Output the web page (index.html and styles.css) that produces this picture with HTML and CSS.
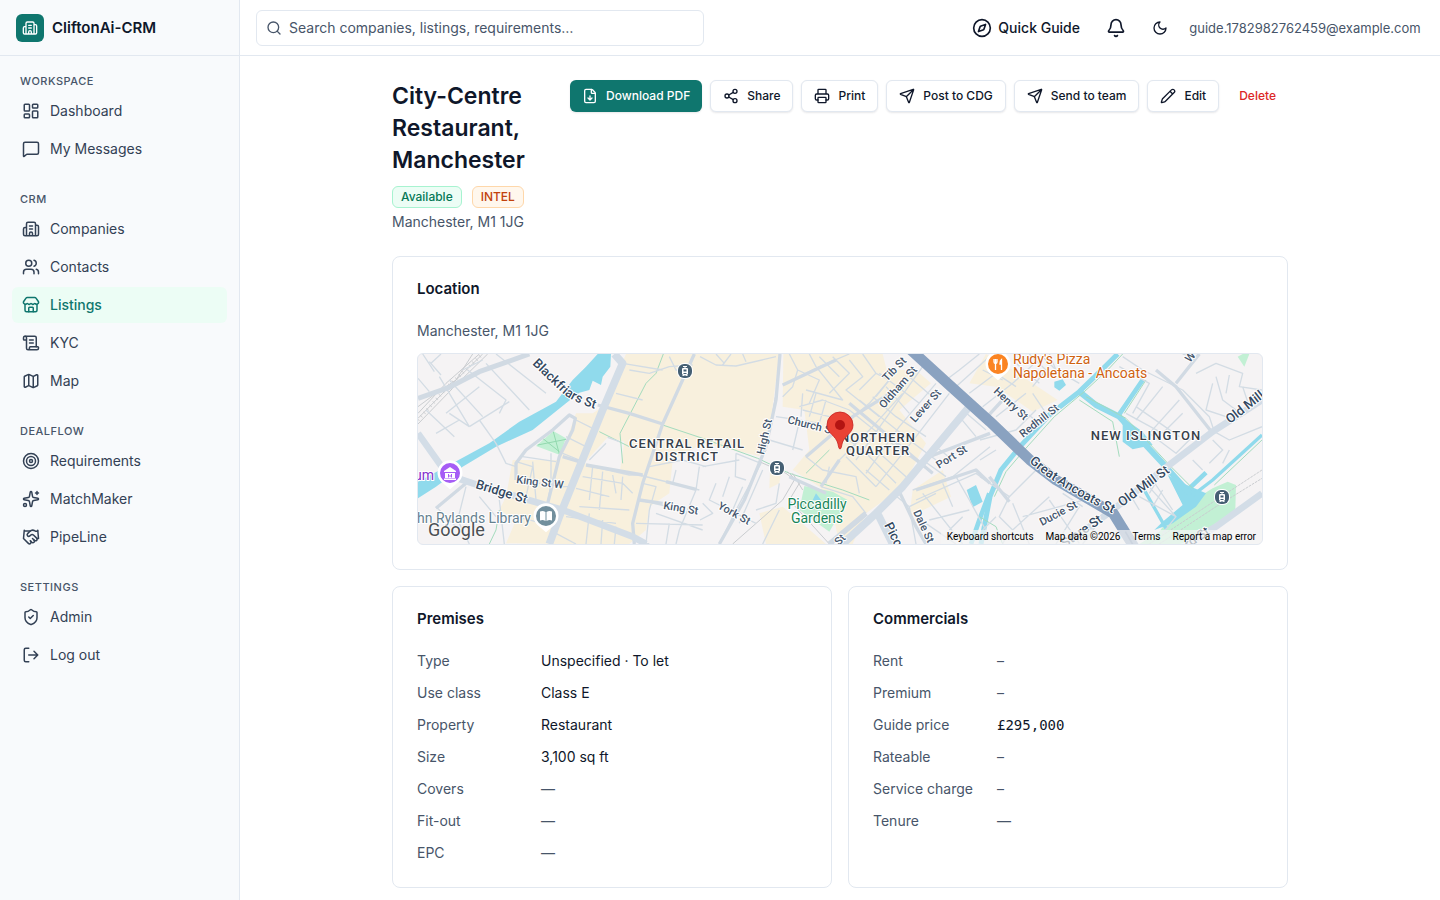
FILE: index.html
```html
<!DOCTYPE html>
<html lang="en">
<head>
<meta charset="utf-8">
<meta name="viewport" content="width=device-width, initial-scale=1">
<title>City-Centre Restaurant, Manchester · CliftonAi-CRM</title>
<link rel="stylesheet" href="styles.css">
</head>
<body>
<svg class="sprite" aria-hidden="true">
  <symbol id="building" viewBox="0 0 24 24"><path d="M10 12h4M10 8h4M14 21v-3a2 2 0 0 0-4 0v3M6 10H4a2 2 0 0 0-2 2v7a2 2 0 0 0 2 2h16a2 2 0 0 0 2-2V9a2 2 0 0 0-2-2h-2M6 21V5a2 2 0 0 1 2-2h8a2 2 0 0 1 2 2v16"/></symbol>
  <symbol id="dashboard" viewBox="0 0 24 24"><rect width="7" height="9" x="3" y="3" rx="1"/><rect width="7" height="5" x="14" y="3" rx="1"/><rect width="7" height="9" x="14" y="12" rx="1"/><rect width="7" height="5" x="3" y="16" rx="1"/></symbol>
  <symbol id="message" viewBox="0 0 24 24"><path d="M22 17a2 2 0 0 1-2 2H6.828a2 2 0 0 0-1.414.586l-2.202 2.202A.71.71 0 0 1 2 21.286V5a2 2 0 0 1 2-2h16a2 2 0 0 1 2 2z"/></symbol>
  <symbol id="users" viewBox="0 0 24 24"><path d="M16 21v-2a4 4 0 0 0-4-4H6a4 4 0 0 0-4 4v2M16 3.128a4 4 0 0 1 0 7.744M22 21v-2a4 4 0 0 0-3-3.870"/><circle cx="9" cy="7" r="4"/></symbol>
  <symbol id="store" viewBox="0 0 24 24"><path d="M15 21v-5a1 1 0 0 0-1-1h-4a1 1 0 0 0-1 1v5"/><path d="M17.774 10.31a1.12 1.12 0 0 0-1.549 0 2.5 2.5 0 0 1-3.451 0 1.12 1.12 0 0 0-1.548 0 2.5 2.5 0 0 1-3.452 0 1.12 1.12 0 0 0-1.549 0 2.5 2.5 0 0 1-3.77-3.248l2.889-4.184A2 2 0 0 1 7 2h10a2 2 0 0 1 1.653.873l2.895 4.192a2.5 2.5 0 0 1-3.774 3.244"/><path d="M4 10.95V19a2 2 0 0 0 2 2h12a2 2 0 0 0 2-2v-8.05"/></symbol>
  <symbol id="scroll" viewBox="0 0 24 24"><path d="M15 12h-5M15 8h-5M19 17V5a2 2 0 0 0-2-2H4"/><path d="M8 21h12a2 2 0 0 0 2-2v-1a1 1 0 0 0-1-1H11a1 1 0 0 0-1 1v1a2 2 0 1 1-4 0V5a2 2 0 1 0-4 0v2a1 1 0 0 0 1 1h3"/></symbol>
  <symbol id="map" viewBox="0 0 24 24"><path d="M14.106 5.553a2 2 0 0 0 1.788 0l3.659-1.83A1 1 0 0 1 21 4.619v12.764a1 1 0 0 1-.553.894l-4.553 2.277a2 2 0 0 1-1.788 0l-4.212-2.106a2 2 0 0 0-1.788 0l-3.659 1.83A1 1 0 0 1 3 19.381V6.618a1 1 0 0 1 .553-.894l4.553-2.277a2 2 0 0 1 1.788 0zM15 5.764v15M9 3.236v15"/></symbol>
  <symbol id="target" viewBox="0 0 24 24"><circle cx="12" cy="12" r="10"/><circle cx="12" cy="12" r="6"/><circle cx="12" cy="12" r="2"/></symbol>
  <symbol id="sparkles" viewBox="0 0 24 24"><path d="M11.017 2.814a1 1 0 0 1 1.966 0l1.051 5.558a2 2 0 0 0 1.594 1.594l5.558 1.051a1 1 0 0 1 0 1.966l-5.558 1.051a2 2 0 0 0-1.594 1.594l-1.051 5.558a1 1 0 0 1-1.966 0l-1.051-5.558a2 2 0 0 0-1.594-1.594l-5.558-1.051a1 1 0 0 1 0-1.966l5.558-1.051a2 2 0 0 0 1.594-1.594zM20 2v4M22 4h-4"/><circle cx="4" cy="20" r="2"/></symbol>
  <symbol id="handshake" viewBox="0 0 24 24"><path d="m11 17 2 2a1 1 0 1 0 3-3"/><path d="m14 14 2.500 2.500a1 1 0 1 0 3-3l-3.880-3.880a3 3 0 0 0-4.240 0l-.88.88a1 1 0 1 1-3-3l2.810-2.810a5.790 5.790 0 0 1 7.060-.87l.47.28a2 2 0 0 0 1.420.25L21 4"/><path d="m21 3 1 11h-2M3 3 2 14l6.500 6.500a1 1 0 1 0 3-3M3 4h8"/></symbol>
  <symbol id="shield" viewBox="0 0 24 24"><path d="M20 13c0 5-3.500 7.500-7.660 8.950a1 1 0 0 1-.67-.01C7.500 20.500 4 18 4 13V6a1 1 0 0 1 1-1c2 0 4.500-1.200 6.240-2.720a1.170 1.170 0 0 1 1.520 0C14.510 3.810 17 5 19 5a1 1 0 0 1 1 1z"/><path d="m9 12 2 2 4-4"/></symbol>
  <symbol id="logout" viewBox="0 0 24 24"><path d="m16 17 5-5-5-5M21 12H9M9 21H5a2 2 0 0 1-2-2V5a2 2 0 0 1 2-2h4"/></symbol>
  <symbol id="search" viewBox="0 0 24 24"><circle cx="11" cy="11" r="8"/><path d="m21 21-4.340-4.340"/></symbol>
  <symbol id="compass" viewBox="0 0 24 24"><path d="m16.240 7.760-1.804 5.411a2 2 0 0 1-1.265 1.265L7.760 16.240l1.804-5.411a2 2 0 0 1 1.265-1.265z"/><circle cx="12" cy="12" r="10"/></symbol>
  <symbol id="bell" viewBox="0 0 24 24"><path d="M10.268 21a2 2 0 0 0 3.464 0M3.262 15.326A1 1 0 0 0 4 17h16a1 1 0 0 0 .740-1.673C19.410 13.956 18 12.499 18 8A6 6 0 0 0 6 8c0 4.499-1.411 5.956-2.738 7.326"/></symbol>
  <symbol id="moon" viewBox="0 0 24 24"><path d="M12 3a6 6 0 0 0 9 9 9 9 0 1 1-9-9"/></symbol>
  <symbol id="file-down" viewBox="0 0 24 24"><path d="M6 22a2 2 0 0 1-2-2V4a2 2 0 0 1 2-2h8a2.400 2.400 0 0 1 1.704.706l3.588 3.588A2.400 2.400 0 0 1 20 8v12a2 2 0 0 1-2 2z"/><path d="M14 2v5a1 1 0 0 0 1 1h5M12 18v-6M9 15l3 3 3-3"/></symbol>
  <symbol id="share" viewBox="0 0 24 24"><circle cx="18" cy="5" r="3"/><circle cx="6" cy="12" r="3"/><circle cx="18" cy="19" r="3"/><path d="m8.590 13.510 6.830 3.980M15.410 6.510l-6.820 3.980"/></symbol>
  <symbol id="printer" viewBox="0 0 24 24"><path d="M6 18H4a2 2 0 0 1-2-2v-5a2 2 0 0 1 2-2h16a2 2 0 0 1 2 2v5a2 2 0 0 1-2 2h-2M6 9V3a1 1 0 0 1 1-1h10a1 1 0 0 1 1 1v6"/><rect x="6" y="14" width="12" height="8" rx="1"/></symbol>
  <symbol id="send" viewBox="0 0 24 24"><path d="M14.536 21.686a.5.5 0 0 0 .937-.024l6.500-19a.496.496 0 0 0-.635-.635l-19 6.500a.5.5 0 0 0-.024.937l7.930 3.180a2 2 0 0 1 1.112 1.110zM21.854 2.147l-10.940 10.939"/></symbol>
  <symbol id="pencil" viewBox="0 0 24 24"><path d="M21.174 6.812a1 1 0 0 0-3.986-3.987L3.842 16.174a2 2 0 0 0-.5.830l-1.321 4.352a.5.5 0 0 0 .623.622l4.353-1.320a2 2 0 0 0 .830-.497zM15 5l4 4"/></symbol>
  <symbol id="tram" viewBox="0 0 16 16"><rect x="0" y="0" width="16" height="16" rx="7" fill="#fff"/><rect x="1" y="1" width="14" height="14" rx="6" fill="#455f73"/><path d="M6 3h4v1H8.500v1H10a1 1 0 0 1 1 1v5l-1 1 1 1H9.500L9 12.500H7L6.500 13H5l1-1-1-1V6a1 1 0 0 1 1-1h1.500V4H6z" fill="#fff"/><path d="M6.500 6.500h3v2h-3zM6.500 10h3v1h-3z" fill="#455f73"/></symbol>
</svg>

<div class="app">
  <aside class="sidebar">
    <a class="brand" href="#">
      <span class="brand-mark"><svg class="icon icon-sm"><use href="#building"/></svg></span>
      <span>CliftonAi-CRM</span>
    </a>
    <nav class="nav" aria-label="Main">
      <section class="nav-group">
        <h2 class="nav-label">WORKSPACE</h2>
        <a class="nav-item" href="#"><svg class="icon"><use href="#dashboard"/></svg>Dashboard</a>
        <a class="nav-item" href="#"><svg class="icon"><use href="#message"/></svg>My Messages</a>
      </section>
      <section class="nav-group">
        <h2 class="nav-label">CRM</h2>
        <a class="nav-item" href="#"><svg class="icon"><use href="#building"/></svg>Companies</a>
        <a class="nav-item" href="#"><svg class="icon"><use href="#users"/></svg>Contacts</a>
        <a class="nav-item active" href="#" aria-current="page"><svg class="icon"><use href="#store"/></svg>Listings</a>
        <a class="nav-item" href="#"><svg class="icon"><use href="#scroll"/></svg>KYC</a>
        <a class="nav-item" href="#"><svg class="icon"><use href="#map"/></svg>Map</a>
      </section>
      <section class="nav-group">
        <h2 class="nav-label">DEALFLOW</h2>
        <a class="nav-item" href="#"><svg class="icon"><use href="#target"/></svg>Requirements</a>
        <a class="nav-item" href="#"><svg class="icon"><use href="#sparkles"/></svg>MatchMaker</a>
        <a class="nav-item" href="#"><svg class="icon"><use href="#handshake"/></svg>PipeLine</a>
      </section>
      <section class="nav-group">
        <h2 class="nav-label">SETTINGS</h2>
        <a class="nav-item" href="#"><svg class="icon"><use href="#shield"/></svg>Admin</a>
        <button class="nav-item" type="button"><svg class="icon"><use href="#logout"/></svg>Log out</button>
      </section>
    </nav>
  </aside>

  <div class="page">
    <header class="topbar">
      <label class="search">
        <svg class="icon icon-sm"><use href="#search"/></svg>
        <input type="search" aria-label="Search" placeholder="Search companies, listings, requirements…">
      </label>
      <div class="topbar-end">
        <button class="guide" type="button"><svg class="icon icon-lg"><use href="#compass"/></svg>Quick Guide</button>
        <button class="icon-button" type="button" aria-label="Notifications"><svg class="icon icon-lg"><use href="#bell"/></svg></button>
        <button class="icon-button" type="button" aria-label="Toggle dark mode"><svg class="icon icon-sm"><use href="#moon"/></svg></button>
        <span class="account">guide.1782982762459@example.com</span>
      </div>
    </header>

    <main class="content">
      <div class="listing-head">
        <div class="listing-title">
          <h1>City-Centre Restaurant, Manchester</h1>
          <div class="badges"><span class="badge badge-green">Available</span><span class="badge badge-orange">INTEL</span></div>
          <p class="muted">Manchester, M1 1JG</p>
        </div>
        <div class="actions">
          <button class="btn btn-primary" type="button"><svg class="icon icon-sm"><use href="#file-down"/></svg>Download PDF</button>
          <button class="btn" type="button"><svg class="icon icon-sm"><use href="#share"/></svg>Share</button>
          <button class="btn" type="button"><svg class="icon icon-sm"><use href="#printer"/></svg>Print</button>
          <button class="btn" type="button"><svg class="icon icon-sm"><use href="#send"/></svg>Post to CDG</button>
          <button class="btn" type="button"><svg class="icon icon-sm"><use href="#send"/></svg>Send to team</button>
          <button class="btn" type="button"><svg class="icon icon-sm"><use href="#pencil"/></svg>Edit</button>
          <button class="btn btn-danger" type="button">Delete</button>
        </div>
      </div>

      <section class="card">
        <h2 class="card-title">Location</h2>
        <p class="muted">Manchester, M1 1JG</p>
        <div class="map">
          <svg class="map-canvas" viewBox="0 0 844 190" preserveAspectRatio="xMidYMid slice" role="img" aria-label="Map of central Manchester">
            <defs>
              <path id="blackfriars" d="M114 10L143 38Q155 49 184 57"/>
              <path id="ancoats" d="M611 108Q640 134 702 163"/>
            </defs>
            <g transform="scale(.3333333) translate(-6 -12)" fill="none" stroke-linejoin="round">
              <!-- shopping districts -->
              <g fill="#f8f0dd">
                <path d="M630 12H1090L1065 210L1030 318L860 280L770 330L760 430L700 470L690 540L640 582H440L270 580L300 510L250 480L270 440L290 330L430 330L480 190L530 190L560 170Z"/>
                <path d="M1102 12H1400L1412 60H1500L1545 100L1450 180L1530 280L1460 410L1350 490L1310 582H1270L1240 440L1210 410L1130 360L1180 300L1165 180L1100 170Z"/>
                <path d="M1490 420L1580 360L1605 440L1480 500Z"/><path d="M1030 490L1100 470L1230 582H1050Z"/>
                <path d="M1660 100L1710 12L1790 60L1925 150L1850 185L1740 110Z"/><path d="M1062 360L1100 340L1090 400L1060 415Z"/>
              </g>
              <path d="M575 262L625 275L612 360L505 340Z" fill="#f5f3f4"/>
              <!-- parks -->
              <g fill="#c2f0d4">
                <path d="M412 243L450 265L432 315L360 288Z"/>
                <path d="M1165 408L1250 425L1295 450L1240 545L1150 480Z"/>
                <path d="M2230 545L2270 490L2390 415L2435 395L2460 405L2458 480L2310 582H2170Z"/>
                <path d="M2480 12H2500L2485 50L2465 20Z"/>
              </g>
              <path d="M365 285L450 268M412 245L430 312M380 265L430 305" stroke="#93d9af" stroke-width="3"/>
              <!-- water -->
              <path d="M545 12L585 12L583 50L560 80L555 105L530 92L520 120L490 128L450 160L350 240L240 290L140 350L60 410L6 445V395L100 345L220 280L310 215L420 155L470 90L510 50Z" fill="#90daec"/>
              <path d="M2102 190L2180 245L2210 285L2150 298L2120 275V225ZM2255 375L2290 395L2325 410L2370 430L2340 470L2270 520L2215 540L2240 515L2300 465Z" fill="#90daec"/>
              <path d="M1652 420L1680 405L1700 455L1670 472ZM1915 95L1940 88L1950 105L1930 122L1915 112ZM1200 430L1215 450H1190Z" fill="#90daec"/>
              <g stroke="#90daec">
                <path d="M2105 12L2062 55L1990 125L1900 195L1812 290L1755 360L1722 440L1695 582" stroke-width="15"/>
                <path d="M1990 125L2040 165L2110 200L2240 340L2320 430" stroke-width="18"/>
                <path d="M2180 90L2105 200M2320 415L2370 368" stroke-width="14"/>
                <path d="M2182 415L2250 535M2538 255L2390 390L2325 440" stroke-width="10"/>
                <path d="M1720 430L1690 510L1665 582" stroke-width="14"/>
              </g>
              <g stroke="#a3dbbd" stroke-width="3">
                <path d="M620 340L612 250L690 100L720 70L742 12M740 225L860 265L1025 325L1120 370L1280 420L1360 450M550 245L640 290M1170 370L1240 300"/>
                <path d="M2120 12L2075 60L2005 125L1915 200L1825 300L1770 365L1735 440M2010 140L2130 205L2260 345L2330 415M2190 90L2125 190M2538 270L2395 405M1990 150L2090 215L2110 320"/>
                <path d="M250 480L240 540L220 582M1690 500L1740 530L1760 582"/>
              </g>
              <!-- railway -->
              <g stroke="#c9cccf" stroke-width="3">
                <path d="M6 190L90 100L190 12M6 205L100 110L200 12M6 222L110 115L215 12M6 170L60 130L120 90L170 12"/>
                <path d="M6 210L100 105L200 12" stroke-width="10" stroke-dasharray="2 12"/>
                <path d="M2200 582L2370 470L2538 360M2230 582L2400 470L2538 385" stroke-dasharray="8 3"/>
                <path d="M1092 12L1082 120L1050 300L1030 335L1110 370L1135 390L1100 450L950 582M1115 365L1150 400L1120 450L1240 582M1130 370L1160 420"/>
              </g>
              <!-- side streets -->
              <g stroke="#d3dce4" stroke-width="4">
                <path d="M6 85L40 125M20 12L55 65M75 12L45 40M40 35L75 75M70 80L160 230M100 90L200 200M155 60L270 150L250 190M210 40L340 180M240 12L390 130M160 230L280 155M90 190L190 110M30 180L115 260M100 190L160 230M60 250L130 210M190 210L240 280L270 340L300 350M200 30L140 60"/>
                <path d="M480 210L530 235M450 260L510 290M440 310L490 330M300 335L350 350L330 440M300 390L440 410M320 320L420 335M350 335L360 450M405 310V400L395 460M420 410H460M150 410L125 510L160 582M60 470L130 540M250 450L265 582M190 440L240 500"/>
                <path d="M510 345L640 375H680M500 380L620 400L650 430M480 415L580 440M530 350L520 450M560 365L550 480M590 375L600 430M620 380L615 450M490 470L640 480M450 500L600 520M300 500L420 530M420 550L480 582M520 490L510 582M560 510L555 582M600 530L595 582M575 262L610 275M520 330L570 280M670 450L800 480M670 375L850 420M680 400L720 410L700 480M700 350L800 330L870 350M780 360L770 400M850 350L840 420L790 540M720 490L860 540M660 520L860 525M700 480L690 582M760 520L750 582M790 540L780 582M650 560L700 582"/>
                <path d="M640 60L700 70L760 50L830 45M600 130L680 150M620 40L740 60M760 20L780 60L830 70"/>
                <path d="M852 20L900 45L960 48L1080 20M900 12L925 40M945 12L920 45M980 12L990 35M1080 200L1150 210L1210 220M1060 270L1160 300M1150 215L1130 300M960 310L1035 340L960 480L910 582M960 310L958 380L990 390M860 350L970 330M900 400L880 450L1020 520M940 380L920 440M980 410L950 480M1040 360L970 520M860 460L890 490L852 510M1090 480L1040 582M1090 400L1080 460L1020 480"/>
                <path d="M1100 105L1210 50L1300 12M1120 12L1145 60L1130 110L1100 140M1180 12L1200 50L1280 150L1170 120M1145 60L1210 90L1180 160M1210 20L1270 80M1250 20L1300 70L1240 130M1150 170L1220 150L1300 180M1300 30L1340 80L1290 120L1390 200M1340 12L1380 70L1330 120M1380 70L1420 90L1380 140M1160 130L1155 200M1200 130L1180 200M1230 150L1210 220M1160 180L1240 200"/>
                <path d="M1420 90L1360 160L1170 320L1220 360L1320 380L1330 430M1460 130L1370 230L1270 330L1215 410M1330 150L1480 270L1560 330M1370 140L1440 200L1530 260M1300 180L1400 260L1550 370M1260 240L1350 310L1440 400M1390 70L1510 160M1410 110L1480 190M1480 80L1560 150M1520 50L1420 190L1320 330M1560 100L1450 230L1350 370M1600 130L1500 260L1380 410M1215 410L1310 440L1350 490M1240 350L1230 400M1430 430L1480 470L1500 582M1350 360L1420 420M1380 300L1470 380M1290 320L1380 410"/>
                <path d="M1640 180L1710 240M1630 200L1680 260M1560 290L1610 330M1520 330L1590 380M1490 420L1610 380L1722 290M1500 450L1680 370L1722 400M1520 430L1640 582M1620 380L1660 450L1720 560M1540 510L1660 480M1500 500L1620 582M1480 470L1560 430M1600 540L1640 500M1580 400L1610 470"/>
                <path d="M1590 90L1630 60L1690 12M1620 110L1720 20M1660 130L1740 70L1800 110M1700 170L1790 100L1850 45M1740 200L1830 130M1700 60L1760 90M1800 40L1870 100M1840 12L1890 60L1850 110M1880 20L1930 70M1780 150L1870 220M1850 130L1890 190M1900 12L1920 60L1990 100M1692 270L1800 240L1860 180M1692 330L1740 300"/>
                <path d="M1692 380L1780 440L1750 500L1790 540L1900 440M1780 440L1870 350M1790 460L1840 582M1900 450L1990 580M1940 430L2000 470M1820 500L2040 440M1990 470L1920 582M2060 500L2000 582M1740 500L1700 540M2140 430L2170 480M1780 540L1760 582"/>
                <path d="M2120 20L2180 60L2300 120L2380 200L2395 245M2110 50L2200 100L2150 190M2240 110L2160 210M2290 150L2200 250M2130 190L2240 250L2300 190M2160 170L2290 260M2200 250L2280 310L2350 240M2280 100L2340 20L2300 12M2340 70L2400 40L2480 70L2470 110L2538 120M2390 100L2370 180L2430 200M2400 80L2420 150L2460 180M2440 75L2430 130M2480 110L2500 170M2390 270L2420 300L2380 340M2395 245L2440 270L2538 230M2330 330L2360 360M2440 300L2420 340M2190 400L2280 500L2240 550M2210 390L2270 480M2230 380L2200 430M2170 440L2280 500M2240 420L2210 470"/>
              </g>
              <!-- collector streets -->
              <g stroke="#d1dae3" stroke-width="10">
                <path d="M6 145L100 112L190 65L340 12" stroke-width="15"/>
                <path d="M300 390V340L330 300L410 240L460 195L478 205L470 240L430 320L395 460M60 475L150 400"/>
                <path d="M545 165L640 190L740 222M510 345L680 375M440 320L490 335M670 450L740 460M750 395L840 418"/>
                <path d="M835 12L740 222L680 400L650 520L655 582M1092 12L1080 150L1050 290L985 450L910 582"/>
                <path d="M1100 105L1260 30M1470 100L1310 200L1170 320M1120 380L1230 430M1270 330L1215 410M1450 425L1500 530L1530 582M1500 420L1680 360L1722 400M1540 320L1722 250M1720 380L1780 455M1700 215L1760 150"/>
                <path d="M1300 160L1550 370M2220 60L2280 110L2390 250M2280 100L2350 12"/>
                <path d="M1240 582L1350 490" stroke-width="16"/>
              </g>
              <!-- main roads -->
              <g stroke="#d3dde7" stroke-width="23">
                <path d="M595 12L620 40L560 180L430 500L400 582"/>
                <path d="M6 250L95 375L200 410L440 480L650 560L690 582" stroke-width="20"/>
                <path d="M1660 170L1460 410L1380 490L1280 582M1382 485L1430 582"/>
                <path d="M2538 150L2390 245L2240 360L2090 480L1950 582M2538 430L2400 530L2310 582" stroke-width="20"/>
              </g>
              <path d="M1485 0L1600 105L1722 215L1842 330L1920 390L2092 490L2160 600" stroke="#8aa2c0" stroke-width="32"/>
              <path d="M2128 545L2160 600" stroke="#6884a8" stroke-width="5"/>
            </g>

            <g class="map-text street">
              <text class="strong"><textPath href="#blackfriars">Blackfriars St</textPath></text>
              <text class="strong"><textPath href="#ancoats">Great Ancoats St</textPath></text>
              <text class="strong" transform="translate(57 134) rotate(17)">Bridge St</text>
              <text transform="translate(98 129) rotate(7)">King St W</text>
              <text transform="translate(245 155) rotate(9)">King St</text>
              <text transform="translate(299 154) rotate(29)">York St</text>
              <text transform="translate(346 101) rotate(-77)">High St</text>
              <text transform="translate(369 69) rotate(14)">Church St</text>
              <text transform="translate(469 28) rotate(-46)">Tib St</text>
              <text transform="translate(466 55) rotate(-49)">Oldham St</text>
              <text transform="translate(497 69) rotate(-48)">Lever St</text>
              <text transform="translate(521 115) rotate(-32)">Port St</text>
              <text transform="translate(495 158) rotate(65)">Dale St</text>
              <text class="strong" transform="translate(466 171) rotate(63)">Picc</text>
              <text transform="translate(421 192) rotate(-46)">St</text>
              <text transform="translate(575 38) rotate(43)">Henry St</text>
              <text transform="translate(605 84) rotate(-38)">Redhill St</text>
              <text class="strong" transform="translate(704 153) rotate(-36)">Old Mill St</text>
              <text class="strong" transform="translate(812 70) rotate(-38)">Old Mill</text>
              <text transform="translate(624 172) rotate(-28)">Ducie St</text>
              <text class="strong" transform="translate(647 194) rotate(-35)">Store St</text>
              <text class="strong" transform="translate(764 199) rotate(-34)">ord St</text>
              <text transform="translate(772 9) rotate(-50)">W</text>
            </g>
            <g class="map-text district">
              <text x="269" y="94">CENTRAL RETAIL</text>
              <text x="269" y="107">DISTRICT</text>
              <text x="460" y="88">NORTHERN</text>
              <text x="460" y="101">QUARTER</text>
              <text x="728" y="86">NEW ISLINGTON</text>
            </g>
            <g class="map-text place">
              <text class="green" x="399" y="155">Piccadilly</text>
              <text class="green" x="399" y="169">Gardens</text>
              <text class="orange" x="595" y="10">Rudy's Pizza</text>
              <text class="orange" x="595" y="24">Napoletana - Ancoats</text>
              <text class="purple" x="16" y="126">um</text>
              <text class="grey" x="113" y="169">hn Rylands Library</text>
            </g>
            <use href="#tram" x="259" y="9" width="16" height="16"/>
            <use href="#tram" x="351" y="106" width="16" height="16"/>
            <use href="#tram" x="796" y="135" width="16" height="16"/>
            <g stroke="#fff" stroke-width="2">
              <path d="M32 134L24 127A11.500 11.500 0 1 1 40 127Z" fill="#fff"/><circle cx="32" cy="119" r="11" fill="#a65df5"/>
              <path d="M128 177L120 170A11.500 11.500 0 1 1 136 170Z" fill="#fff"/><circle cx="128" cy="162" r="11" fill="#718f9d"/>
              <path d="M580 25L572 18A11.500 11.500 0 1 1 588 18Z" fill="#fff"/><circle cx="580" cy="10" r="11" fill="#fb8422"/>
            </g>
            <path d="M26 117L32 113L38 117V118H26ZM27 119H37V124H27ZM26 124.500H38V126H26Z" fill="#fff"/><path d="M30.500 120V123.500M33.500 120V123.500M30.500 122H33.500" stroke="#a65df5"/>
            <path d="M122 157.500Q125 156.500 127.500 158V167Q125 165.500 122 166.500ZM134 157.500Q131 156.500 128.500 158V167Q131 165.500 134 166.500Z" fill="#fff"/>
            <path d="M576 5V8Q576 9.500 577.500 9.500T579 8V5M577.500 5V16M583.500 16V5.500Q582 6.500 582 10H583.500" fill="none" stroke="#fff" stroke-width="1.300"/>
            <path d="M422 95C421 95 420.500 93 420 90C418 81 409 80 409 71A13 13 0 0 1 435 71C435 80 426 81 424 90C423.500 93 423 95 422 95Z" fill="#ea4335" stroke="#c5221f" stroke-width=".8"/>
            <circle cx="422" cy="71" r="5" fill="#b31412"/>
          </svg>
          <span class="map-logo">Google</span>
          <div class="map-credits">
            <button type="button">Keyboard shortcuts</button>
            <span>Map data ©2026</span>
            <a href="#">Terms</a>
            <a href="#">Report a map error</a>
          </div>
        </div>
      </section>

      <div class="card-grid">
        <section class="card">
          <h2 class="card-title">Premises</h2>
          <dl class="facts">
            <dt>Type</dt><dd>Unspecified · To let</dd>
            <dt>Use class</dt><dd>Class E</dd>
            <dt>Property</dt><dd>Restaurant</dd>
            <dt>Size</dt><dd>3,100 sq ft</dd>
            <dt>Covers</dt><dd class="empty">—</dd>
            <dt>Fit-out</dt><dd class="empty">—</dd>
            <dt>EPC</dt><dd class="empty">—</dd>
          </dl>
        </section>
        <section class="card">
          <h2 class="card-title">Commercials</h2>
          <dl class="facts">
            <dt>Rent</dt><dd class="empty">–</dd>
            <dt>Premium</dt><dd class="empty">–</dd>
            <dt>Guide price</dt><dd class="money">£295,000</dd>
            <dt>Rateable</dt><dd class="empty">–</dd>
            <dt>Service charge</dt><dd class="empty">–</dd>
            <dt>Tenure</dt><dd class="empty">—</dd>
          </dl>
        </section>
      </div>
    </main>
  </div>
</div>
</body>
</html>
```
FILE: styles.css
```css
:root {
  --ink: #0f172a;
  --text: #334155;
  --muted: #475569;
  --line: #e2e8f0;
  --teal: #0f766e;
}
* { box-sizing: border-box; }
body {
  margin: 0;
  background: #fff;
  color: var(--ink);
  font: 14px/20px Inter, "Liberation Sans", sans-serif;
}
h1, h2, p, dl, dd { margin: 0; }
a { color: inherit; text-decoration: none; }
button { margin: 0; border: 0; background: none; color: inherit; font: inherit; cursor: pointer; }

.sprite { position: absolute; width: 0; height: 0; }
.icon {
  flex: none;
  width: 18px;
  height: 18px;
  fill: none;
  stroke: currentColor;
  stroke-width: 2;
  stroke-linecap: round;
  stroke-linejoin: round;
}
.icon-sm { width: 16px; height: 16px; }
.icon-lg { width: 20px; height: 20px; }

.app { display: grid; grid-template-columns: 240px minmax(0, 1fr); min-height: 100vh; }

.sidebar { border-right: 1px solid var(--line); background: #f8fafc; }
.brand {
  display: flex;
  align-items: center;
  gap: 8px;
  height: 56px;
  padding: 0 16px;
  border-bottom: 1px solid var(--line);
  font-size: 15px;
  font-weight: 600;
}
.brand-mark {
  display: grid;
  place-items: center;
  width: 28px;
  height: 28px;
  border-radius: 6px;
  background: var(--teal);
  color: #fff;
}
.nav { display: flex; flex-direction: column; gap: 24px; padding: 17px 12px; }
.nav-group { display: flex; flex-direction: column; gap: 2px; }
.nav-label {
  padding: 0 8px 2px;
  color: var(--muted);
  font-size: 11px;
  font-weight: 500;
  line-height: 16px;
  letter-spacing: 0.5px;
}
.nav-item {
  display: flex;
  align-items: center;
  gap: 10px;
  height: 36px;
  padding: 0 10px;
  border-radius: 6px;
  color: var(--text);
}
.nav-item.active { background: #ecfdf5; color: var(--teal); font-weight: 500; }

.topbar {
  display: flex;
  align-items: center;
  justify-content: space-between;
  gap: 16px;
  height: 56px;
  padding: 0 16px;
  border-bottom: 1px solid var(--line);
}
.search {
  display: flex;
  align-items: center;
  gap: 7px;
  flex: 0 1 448px;
  height: 36px;
  padding: 0 9px;
  border: 1px solid var(--line);
  border-radius: 6px;
  color: var(--muted);
}
.search input { flex: 1; min-width: 0; padding: 0; border: 0; outline: 0; background: none; color: var(--ink); font: inherit; }
.search input::placeholder { color: var(--muted); opacity: 1; }
.topbar-end { display: flex; align-items: center; gap: 8px; }
.guide { display: flex; align-items: center; gap: 6px; height: 36px; padding: 0 10px; font-weight: 500; }
.icon-button { display: grid; place-items: center; width: 36px; height: 36px; padding: 0; }
.account { min-width: 238px; color: var(--muted); font-size: 13px; text-align: center; }

.content { display: flex; flex-direction: column; gap: 16px; max-width: 944px; margin: 0 auto; padding: 24px 24px 12px; }
.listing-head { display: flex; justify-content: space-between; gap: 16px; padding-bottom: 8px; }
.listing-title { min-width: 0; }
.listing-title h1 { font-size: 23px; font-weight: 600; line-height: 32px; }
.badges { display: flex; gap: 10px; margin: 10px 0 4px; }
.badge { padding: 0 8px; border: 1px solid; border-radius: 6px; font-size: 12px; font-weight: 500; line-height: 20px; }
.badge-green { border-color: #a7f3d0; background: #ecfdf5; color: #047857; }
.badge-orange { border-color: #fed7aa; background: #fff7ed; color: #c2410c; }
.muted { color: var(--muted); }
.actions { display: flex; flex: none; gap: 8px; }
.btn {
  display: flex;
  align-items: center;
  gap: 8px;
  height: 32px;
  padding: 0 12px;
  border: 1px solid var(--line);
  border-radius: 6px;
  background: #fff;
  box-shadow: 0 1px 2px rgb(15 23 42 / 10%);
  font-size: 12px;
  font-weight: 500;
  white-space: nowrap;
}
.btn-primary { border: 0; background: var(--teal); color: #fff; }
.btn-danger { border: 0; box-shadow: none; color: #dc2626; }

.card { padding: 24px; border: 1px solid var(--line); border-radius: 8px; background: #fff; }
.card-title { margin-bottom: 24px; font-size: 15px; font-weight: 600; line-height: 16px; }
.card-grid { display: grid; grid-template-columns: 1fr 1fr; gap: 16px; }
.facts { display: grid; grid-template-columns: 112px 1fr; gap: 12px; }
.facts dt, .facts .empty { color: var(--muted); }
.facts .money { font-family: "DejaVu Sans Mono", "Liberation Mono", monospace; }

.map {
  position: relative;
  height: 192px;
  margin-top: 12px;
  overflow: hidden;
  border: 1px solid var(--line);
  border-radius: 6px;
  background: #f5f3f4;
  font-family: Roboto, sans-serif;
}
.map-canvas { display: block; width: 100%; height: 100%; }
.map-text { paint-order: stroke; stroke: #fff; stroke-width: 2px; stroke-linejoin: round; }
.street { fill: #45566d; font-size: 11px; font-weight: 500; }
.street .strong { fill: #334860; font-size: 13px; }
.district { fill: #37404a; font-size: 13px; font-weight: 500; letter-spacing: 1px; text-anchor: middle; }
.place { font-size: 14px; text-anchor: start; }
.place .green { fill: #188558; text-anchor: middle; }
.place .orange { fill: #cf6210; }
.place .purple, .place .grey { text-anchor: end; }
.place .purple { fill: #8430ce; }
.place .grey { fill: #66818f; }
.map-logo {
  position: absolute;
  bottom: 3px;
  left: 10px;
  color: #4b4f53;
  font-size: 18px;
  line-height: 22px;
  text-shadow: 0 0 2px #fff, 0 0 2px #fff;
}
.map-credits {
  position: absolute;
  right: 0;
  bottom: 0;
  display: flex;
  color: #000;
  font-size: 10px;
  line-height: 14px;
  background: rgb(245 245 245 / 70%);
}
.map-credits > * { padding: 0 6px; }
```
